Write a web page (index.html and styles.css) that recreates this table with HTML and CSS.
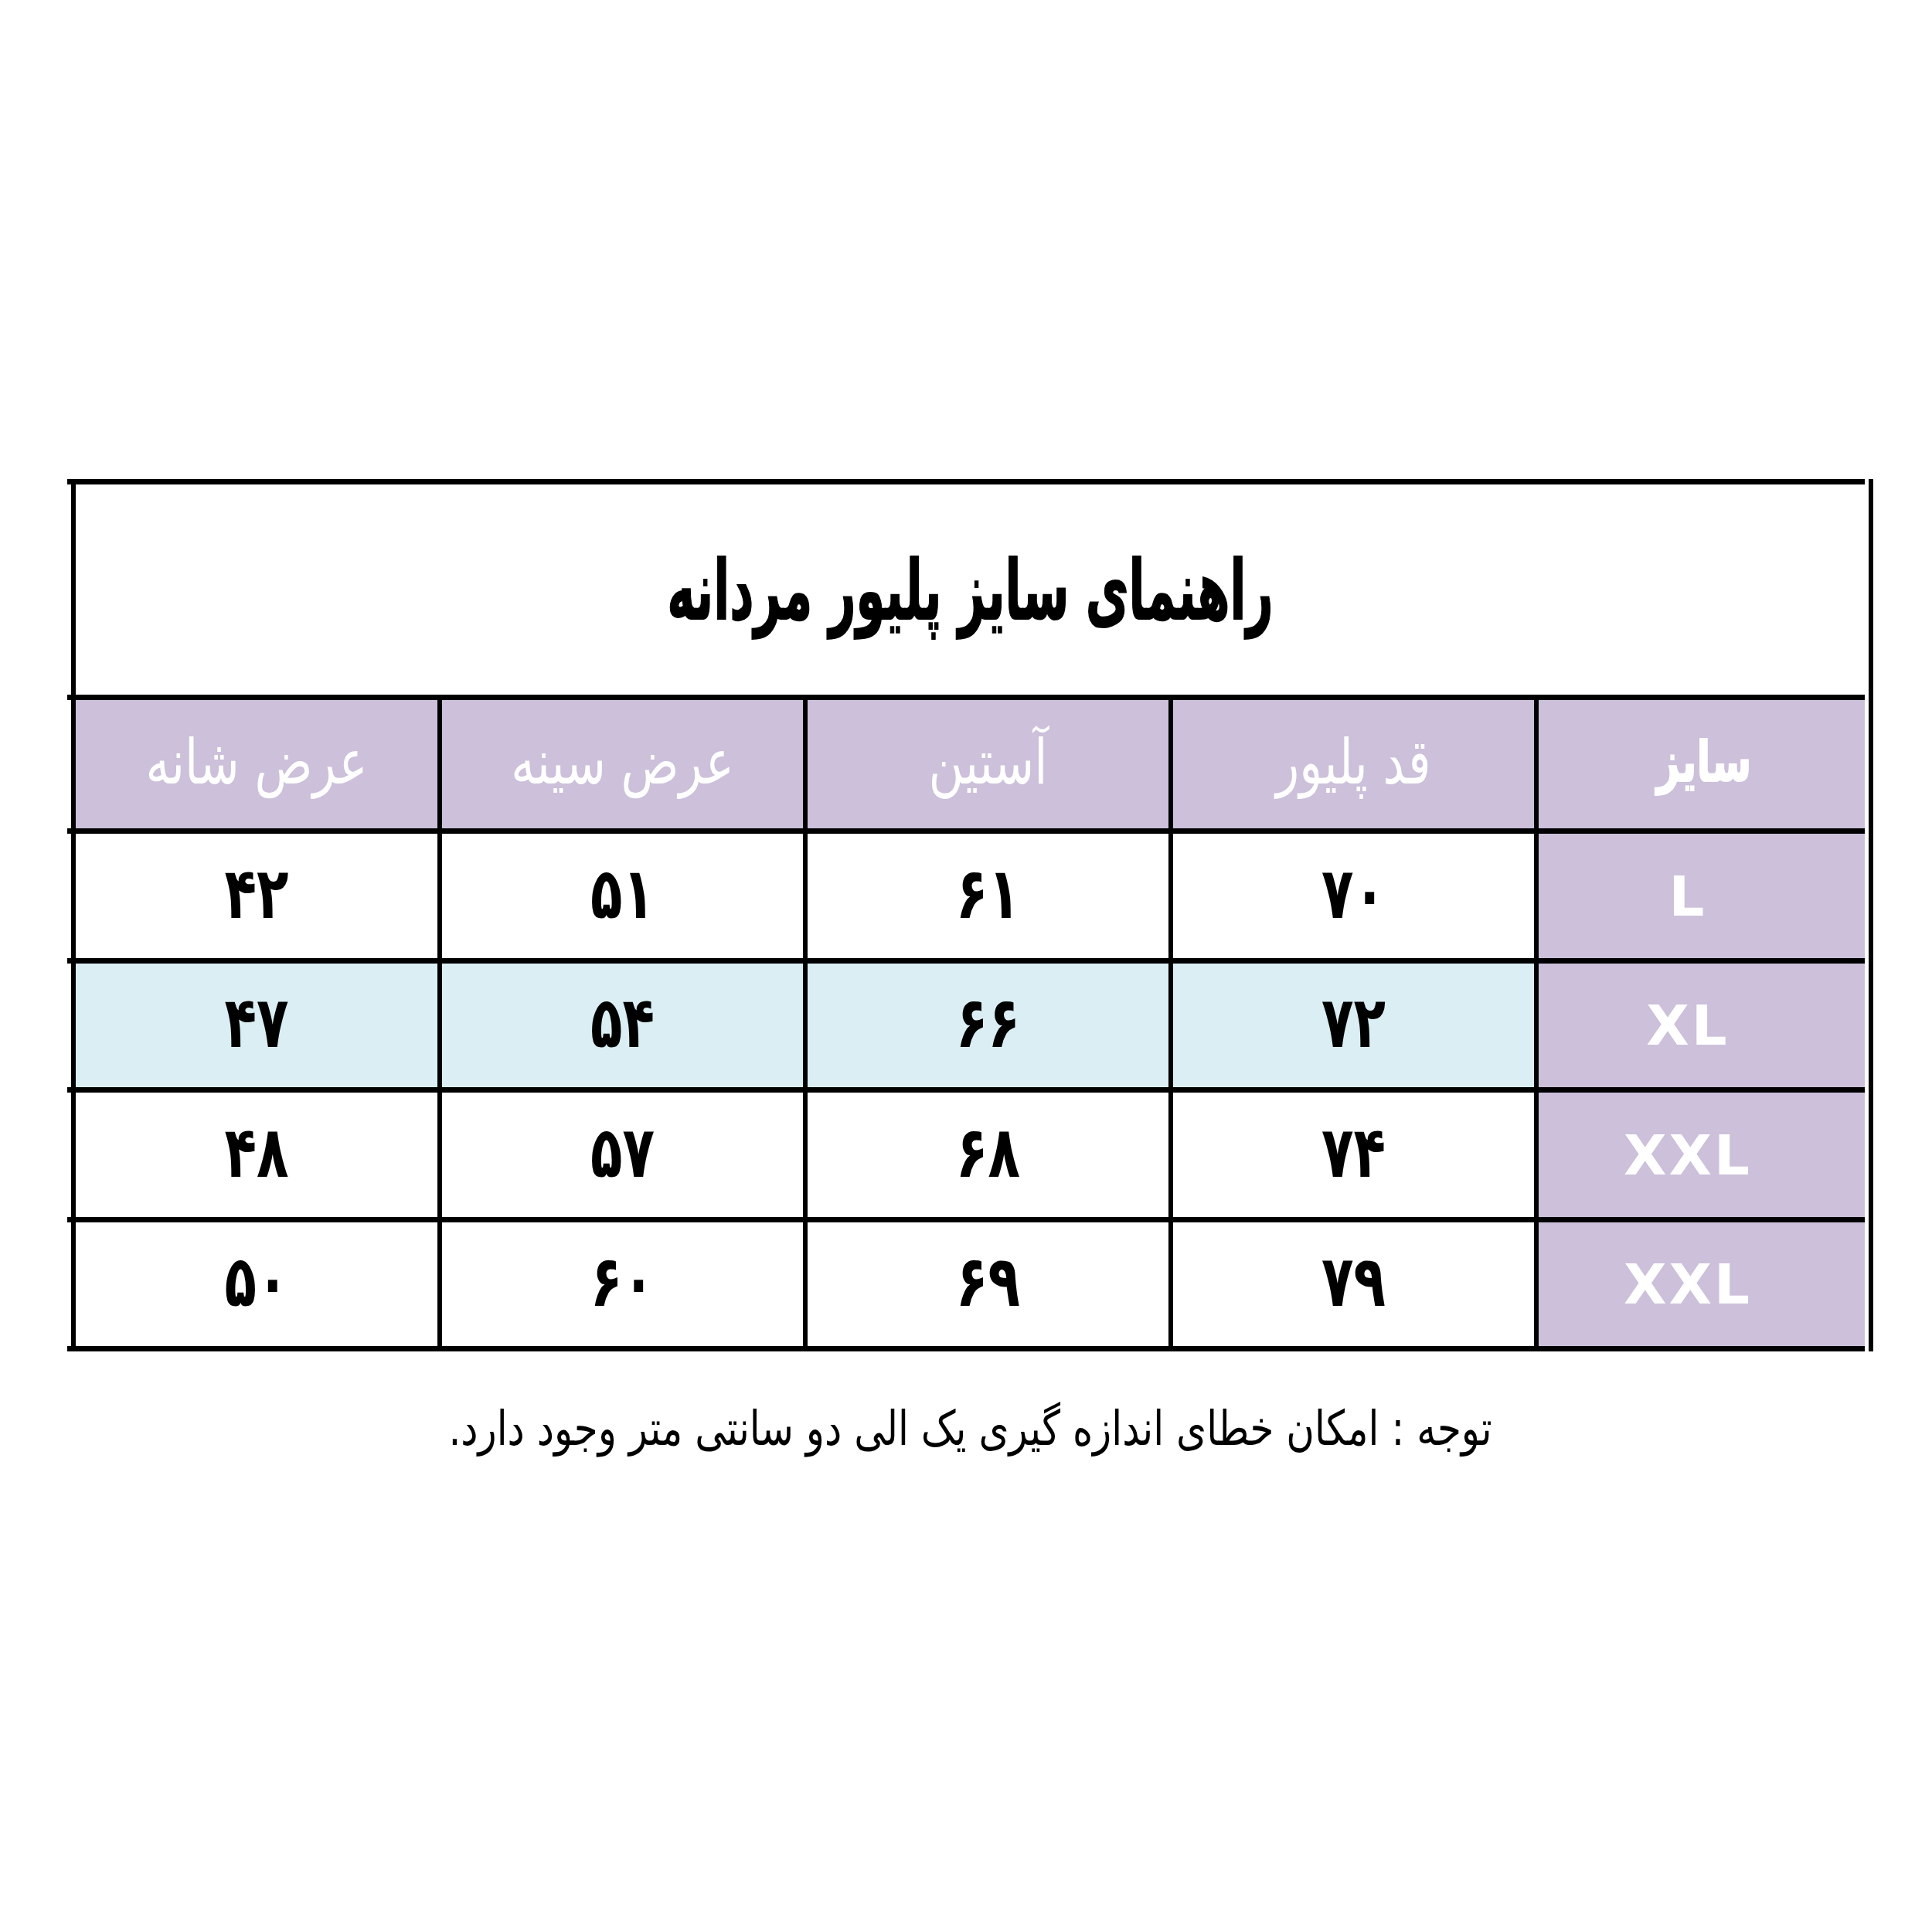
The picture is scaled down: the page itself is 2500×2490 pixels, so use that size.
FILE: index.html
```html
<!DOCTYPE html>
<html lang="fa">
<head>
<meta charset="utf-8">
<title>راهنمای سایز پلیور مردانه</title>
<link rel="stylesheet" href="styles.css">
</head>
<body>
<div class="page">
  <div class="sheet">
    <div class="table" dir="rtl">
      <div class="title-row">
        <div class="title-cell"><h1 class="title">راهنمای سایز پلیور مردانه</h1></div>
      </div>
      <div class="row head">
        <div class="cell head-size"><span class="lbl">سایز</span></div>
        <div class="cell"><span class="lbl">قد پلیور</span></div>
        <div class="cell"><span class="lbl">آستین</span></div>
        <div class="cell"><span class="lbl">عرض سینه</span></div>
        <div class="cell"><span class="lbl">عرض شانه</span></div>
      </div>
      <div class="row data odd">
        <div class="cell size-cell">L</div>
        <div class="cell"><span class="n">۷۰</span></div>
        <div class="cell"><span class="n">۶۱</span></div>
        <div class="cell"><span class="n">۵۱</span></div>
        <div class="cell"><span class="n">۴۲</span></div>
      </div>
      <div class="row data even tint">
        <div class="cell size-cell">XL</div>
        <div class="cell"><span class="n">۷۲</span></div>
        <div class="cell"><span class="n">۶۶</span></div>
        <div class="cell"><span class="n">۵۴</span></div>
        <div class="cell"><span class="n">۴۷</span></div>
      </div>
      <div class="row data odd">
        <div class="cell size-cell">XXL</div>
        <div class="cell"><span class="n">۷۴</span></div>
        <div class="cell"><span class="n">۶۸</span></div>
        <div class="cell"><span class="n">۵۷</span></div>
        <div class="cell"><span class="n">۴۸</span></div>
      </div>
      <div class="row data even">
        <div class="cell size-cell">XXL</div>
        <div class="cell"><span class="n">۷۹</span></div>
        <div class="cell"><span class="n">۶۹</span></div>
        <div class="cell"><span class="n">۶۰</span></div>
        <div class="cell"><span class="n">۵۰</span></div>
      </div>
    </div>
    <div class="edge"></div>
  </div>
  <p class="note" dir="rtl"><span class="note-text">توجه : امکان خطای اندازه گیری یک الی دو سانتی متر وجود دارد.</span></p>
</div>
</body>
</html>
```

FILE: styles.css
```css
html, body {
  margin: 0;
  padding: 0;
  background: #ffffff;
}

body {
  width: 2500px;
  height: 2490px;
  overflow: hidden;
  font-family: "DejaVu Sans", sans-serif;
  color: #000;
}

.page {
  padding-top: 620px;
  padding-left: 87px;
}

.sheet {
  display: flex;
  align-items: flex-start;
}

.table {
  width: 2326px;
  border-top: 7px solid #000;
}

.edge {
  width: 6px;
  height: 1129px;
  margin-left: 5px;
  background: #000;
}

.title-row {
  height: 272px;
  border-bottom: 7px solid #000;
}

.title-cell {
  height: 100%;
  margin-left: 5px;
  border-left: 6px solid #000;
  display: flex;
  align-items: center;
  justify-content: center;
}

.title {
  margin: 0;
  font-family: "DejaVu Sans", sans-serif;
  font-weight: bold;
  font-size: 61px;
  line-height: 1;
  transform: scaleY(1.75);
  -webkit-text-stroke: 1px #000;
}

.row {
  display: grid;
  grid-template-columns: 428px 473px 473px 473px 474px;
  padding-left: 5px;
  border-bottom: 7px solid #000;
}

.row.head {
  height: 166px;
}

.row.odd {
  height: 161px;
}

.row.even {
  height: 160px;
}

.cell {
  box-sizing: border-box;
  border-left: 6px solid #000;
  display: flex;
  align-items: center;
  justify-content: center;
  background: #ffffff;
}

.head .cell {
  background: #ccc0da;
  color: #ffffff;
  font-size: 62px;
  font-weight: normal;
  padding-bottom: 6px;
}

.lbl {
  display: inline-block;
  transform: scaleY(1.3);
}

.row.head .head-size {
  font-weight: bold;
  font-size: 52px;
  padding-left: 6px;
}

.row.head .head-size .lbl {
  font-weight: bold;
  transform: scaleY(1.4);
  -webkit-text-stroke: 1.5px #ffffff;
}

.tint .cell {
  background: #daeef3;
}

.n {
  display: inline-block;
  font-size: 68px;
  font-weight: bold;
  line-height: 1;
  transform: scaleY(1.35);
  margin-bottom: 6px;
}

.row .size-cell {
  background: #ccc0da;
  color: #ffffff;
  font-family: "DejaVu Sans", sans-serif;
  font-weight: bold;
  font-size: 72px;
  letter-spacing: 3px;
  padding-right: 36px;
}

.note {
  width: 2337px;
  margin: 70px 0 0 0;
  text-align: center;
  font-family: "DejaVu Sans", sans-serif;
  font-size: 50px;
  line-height: 1.2;
}

.note-text {
  display: inline-block;
  transform: scaleY(1.25);
}
```
